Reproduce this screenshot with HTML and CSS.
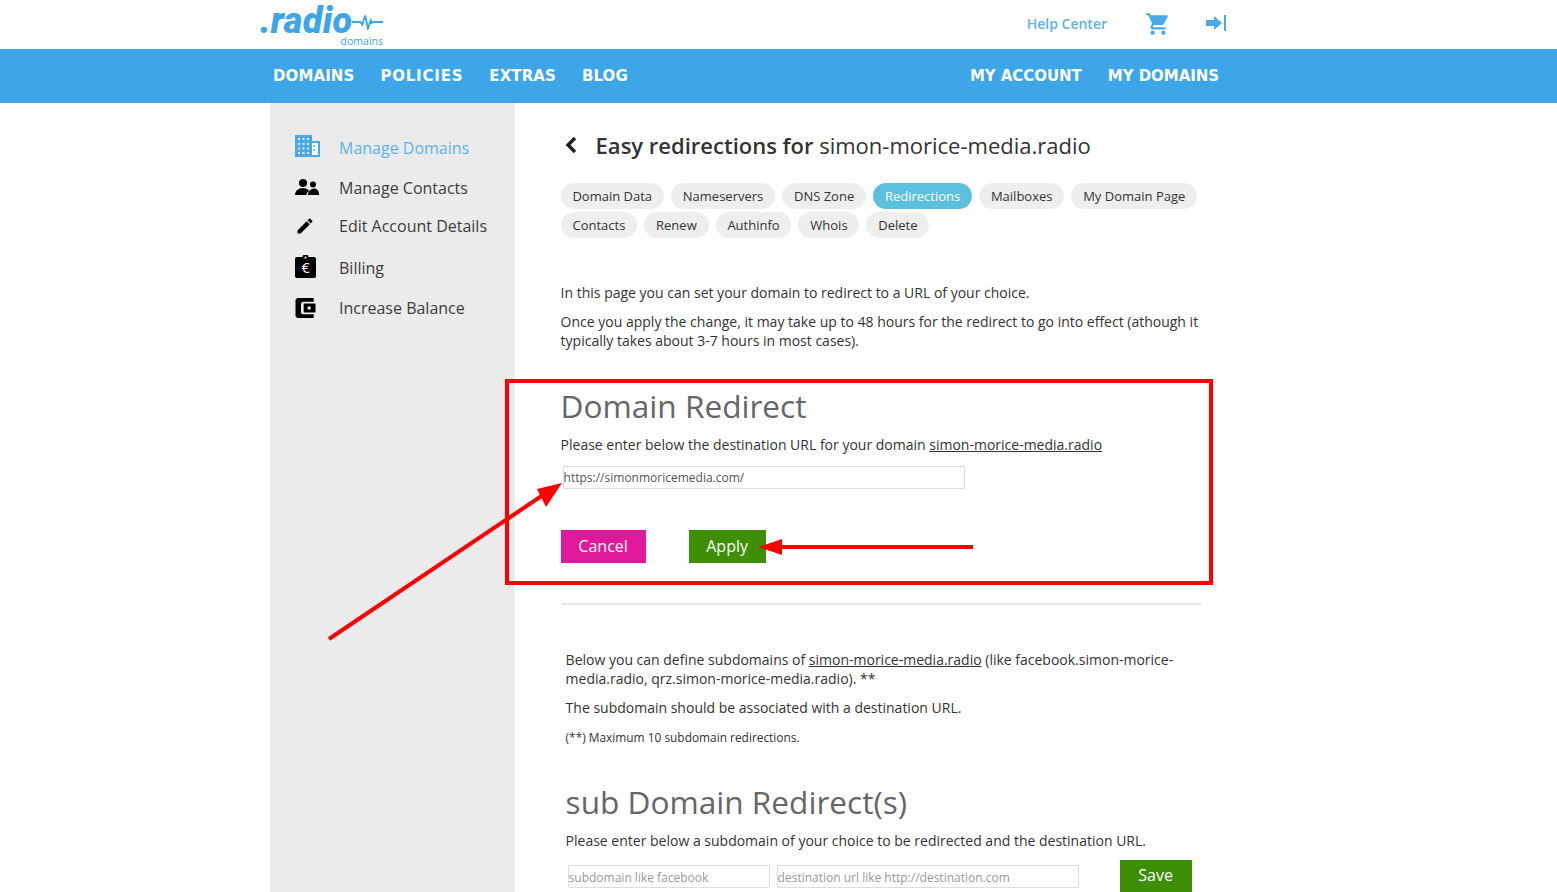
FILE: index.html
```html
<!DOCTYPE html>
<html lang="en">
<head>
    <meta charset="UTF-8">
    <meta name="viewport" content="width=device-width, initial-scale=1.0">
    <title>Easy redirections | .radio domains</title>
    <link rel="stylesheet" href="styles.css">
</head>
<body>
    <div class="page">
        <!-- Top header -->
        <header class="top-bar">
            <div class="container top-inner">
                <a class="logo" href="#">
                    <span class="logo-word">.radio</span>
                    <svg class="logo-pulse" viewBox="0 0 33 16" width="31" height="16">
                        <path d="M0 8h9l2 3 3-10 3 14 3-9 1 3 2-1h10" fill="none" stroke="#3ca6e8" stroke-width="2"/>
                    </svg>
                    <span class="logo-sub">domains</span>
                </a>
                <div class="top-links">
                    <a class="help-link" href="#">Help Center</a>
                    <svg class="cart-icon" viewBox="0 0 24 24" width="26" height="26"><path d="M7 18c-1.1 0-1.99.9-1.99 2S5.9 22 7 22s2-.9 2-2-.9-2-2-2zM1 2v2h2l3.6 7.59-1.35 2.45c-.16.28-.25.61-.25.96 0 1.1.9 2 2 2h12v-2H7.42c-.14 0-.25-.11-.25-.25l.03-.12.9-1.63h7.45c.75 0 1.41-.41 1.75-1.03l3.58-6.49c.08-.14.12-.31.12-.48 0-.55-.45-1-1-1H5.21l-.94-2H1zm16 16c-1.1 0-1.99.9-1.99 2s.89 2 1.99 2 2-.9 2-2-.9-2-2-2z"/></svg>
                    <svg class="login-icon" viewBox="0 0 20 16" width="20" height="16"><path d="M0 5h8V1l8 7-8 7v-4H0zM18 0h2v16h-2z"/></svg>
                </div>
            </div>
        </header>

        <!-- Main nav -->
        <nav class="main-nav">
            <div class="container nav-inner">
                <div class="nav-group nav-left">
                    <a href="#">DOMAINS</a>
                    <a class="nav-wide" href="#">POLICIES</a>
                    <a href="#">EXTRAS</a>
                    <a href="#">BLOG</a>
                </div>
                <div class="nav-group">
                    <a href="#">MY ACCOUNT</a>
                    <a href="#">MY DOMAINS</a>
                </div>
            </div>
        </nav>

        <div class="container body-wrap">
            <!-- Sidebar -->
            <aside class="sidebar">
                <a class="side-item side-domains active" href="#">
                    <svg viewBox="0 0 25 22" width="25" height="22">
                        <path fill-rule="evenodd" d="M0 0h17v6h8v16H0zM3 3v2h2V3zm4.500 0v2h2V3zM12 3v2h2V3zM3 8v2h2V8zm4.500 0v2h2V8zM12 8v2h2V8zM3 12.500v2h2v-2zm4.500 0v2h2v-2zm4.500 0v2h2v-2zM3 17v2h2v-2zm4.500 0v2h2v-2zm4.500 0v2h2v-2z"/>
                        <path fill="white" fill-rule="evenodd" d="M17 8h6v12h-6zm1.500 2v2h1.500v-2zm0 4v2h1.500v-2z"/>
                    </svg>
                    Manage Domains
                </a>
                <a class="side-item side-contacts" href="#">
                    <svg viewBox="0 0 24 16" width="24" height="16">
                        <circle cx="8" cy="4" r="4"/>
                        <circle cx="18" cy="5.500" r="3"/>
                        <path d="M0 16c0-4 3.500-7 7.500-7 3 0 5.500 1 7 3-2 1-3 2.500-3.200 4z"/>
                        <path d="M13 16c0-3.500 3-6.500 6-6.500s5.500 3 5 6.500z"/>
                    </svg>
                    Manage Contacts
                </a>
                <a class="side-item side-edit" href="#">
                    <svg viewBox="0 0 24 24" width="20" height="20"><path d="M3 17.25V21h3.75L17.81 9.94l-3.75-3.75L3 17.25zM20.71 7.04c.39-.39.39-1.02 0-1.41l-2.34-2.34c-.39-.39-1.02-.39-1.41 0l-1.83 1.83 3.75 3.75 1.83-1.83z"/></svg>
                    Edit Account Details
                </a>
                <a class="side-item side-billing" href="#">
                    <svg viewBox="0 0 22 24" width="21" height="23"><path d="M2 2h6a3 3 0 0 1 6 0h6a2 2 0 0 1 2 2v18a2 2 0 0 1-2 2H2a2 2 0 0 1-2-2V4a2 2 0 0 1 2-2z"/><circle cx="11" cy="2.600" r="1.200" fill="#ebebeb"/><text x="11" y="19" text-anchor="middle" class="euro">€</text></svg>
                    Billing
                </a>
                <a class="side-item side-balance" href="#">
                    <svg viewBox="0 0 22 22" width="21" height="20"><path fill-rule="evenodd" d="M3 0h17v4H9a3 3 0 0 0-3 3v8a3 3 0 0 0 3 3h11v4H3a3 3 0 0 1-3-3V3a3 3 0 0 1 3-3zm6 6h13v10H9zm6 3a2 2 0 1 0 0 4 2 2 0 0 0 0-4z"/></svg>
                    Increase Balance
                </a>
            </aside>

            <!-- Content -->
            <main class="content">
                <h1 class="page-title">
                    <svg class="back-icon" viewBox="0 0 12 16" width="12" height="16"><path d="M10 1 3 8l7 7" fill="none" stroke="#1c1c1c" stroke-width="3.400"/></svg>
                    <span><b>Easy redirections for</b> simon-morice-media.radio</span>
                </h1>

                <div class="pills">
                    <a href="#">Domain Data</a>
                    <a href="#">Nameservers</a>
                    <a href="#">DNS Zone</a>
                    <a class="active" href="#">Redirections</a>
                    <a href="#">Mailboxes</a>
                    <a href="#">My Domain Page</a>
                    <a href="#">Contacts</a>
                    <a href="#">Renew</a>
                    <a href="#">Authinfo</a>
                    <a href="#">Whois</a>
                    <a href="#">Delete</a>
                </div>

                <div class="intro">
                    <p>In this page you can set your domain to redirect to a URL of your choice.</p>
                    <p>Once you apply the change, it may take up to 48 hours for the redirect to go into effect (athough it typically takes about 3-7 hours in most cases).</p>
                </div>

                <section class="redirect-box">
                    <h2>Domain Redirect</h2>
                    <p>Please enter below the destination URL for your domain <a href="#">simon-morice-media.radio</a></p>
                    <input class="url-input" type="text" value="https://simonmoricemedia.com/">
                    <div class="btn-row">
                        <button class="btn btn-cancel">Cancel</button>
                        <button class="btn btn-green">Apply</button>
                    </div>
                </section>

                <hr class="divider">

                <section class="sub-box">
                    <p>Below you can define subdomains of <a href="#">simon-morice-media.radio</a> (like facebook.simon-morice-media.radio, qrz.simon-morice-media.radio). **</p>
                    <p>The subdomain should be associated with a destination URL.</p>
                    <p class="note">(**) Maximum 10 subdomain redirections.</p>
                    <h2>sub Domain Redirect(s)</h2>
                    <p>Please enter below a subdomain of your choice to be redirected and the destination URL.</p>
                    <div class="sub-form">
                        <input class="sub-name" type="text" placeholder="subdomain like facebook">
                        <input class="sub-dest" type="text" placeholder="destination url like http://destination.com">
                        <button class="btn btn-green btn-save">Save</button>
                    </div>
                </section>
            </main>
        </div>

        <!-- Red annotations drawn over the page -->
        <svg class="markup" viewBox="0 0 1557 892" width="1557" height="892">
            <rect x="507" y="381" width="704" height="202" fill="none" stroke="#fe0000" stroke-width="4"/>
            <path d="M329 639 543 495" stroke="#fe0000" stroke-width="4" fill="none"/>
            <path d="M562 483 546 507 537 489z" fill="#fe0000"/>
            <path d="M782 547H973" stroke="#fe0000" stroke-width="4" fill="none"/>
            <path d="M758 547 782 539V555z" fill="#fe0000"/>
        </svg>
    </div>
</body>
</html>
```

FILE: styles.css
```css
/* Global Styles */
* {
    box-sizing: border-box;
}

html, body {
    margin: 0;
    height: 100%;
    overflow: hidden;
}

body {
    font-family: 'Open Sans', sans-serif;
    font-size: 14px;
    color: #333;
    background: white;
}

a {
    text-decoration: none;
    color: inherit;
}

.page {
    position: relative;
    height: 892px;
    display: flex;
    flex-direction: column;
    overflow: hidden;
}

.container {
    width: 956px;
    margin-left: 270px;
}

.markup {
    position: absolute;
    left: 0;
    top: 0;
    pointer-events: none;
}

/* Header */
.top-bar {
    height: 49px;
    flex: none;
}

.top-inner {
    display: flex;
    justify-content: space-between;
    height: 49px;
}

.logo {
    position: relative;
    display: block;
    width: 124px;
    height: 49px;
    color: #3ca6e8;
    margin-left: -11px;
}

.logo-word {
    position: absolute;
    left: 1px;
    top: 0;
    line-height: 42px;
    font-family: 'Roboto', sans-serif;
    font-size: 36px;
    font-weight: 900;
    font-style: italic;
    letter-spacing: 0.3px;
}

.logo-pulse {
    position: absolute;
    left: 93px;
    top: 14px;
}

.logo-sub {
    position: absolute;
    right: 0;
    top: 34px;
    font-size: 10.5px;
}

.top-links {
    display: flex;
    align-items: flex-start;
}

.help-link {
    color: #5cb3ec;
    font-size: 14px;
    font-weight: 600;
    margin-top: 14px;
    margin-right: 38px;
}

.cart-icon {
    fill: #4aa9e9;
    margin-top: 11px;
    margin-right: 35px;
}

.login-icon {
    fill: #4aa9e9;
    margin-top: 15px;
}

/* Main nav */
.main-nav {
    height: 54px;
    flex: none;
    background: #3ca6e8;
}

.nav-inner {
    display: flex;
    justify-content: space-between;
    height: 54px;
    align-items: center;
    padding: 0 7px 0 3px;
}

.nav-group {
    display: flex;
    gap: 26px;
}

.nav-group a {
    color: white;
    font-family: 'DejaVu Sans', sans-serif;
    font-weight: bold;
    font-size: 15px;
    letter-spacing: -0.05px;
}

.nav-left a {
    letter-spacing: 0.1px;
}

.nav-left a.nav-wide {
    letter-spacing: 0.8px;
}

/* Body columns */
.body-wrap {
    display: flex;
    flex: 1;
    min-height: 0;
}

.sidebar {
    width: 245px;
    flex: none;
    background: #ebebeb;
    padding-top: 25px;
}

.side-item {
    display: flex;
    align-items: center;
    padding-left: 25px;
    font-size: 16px;
    color: #3d3d3d;
    height: 40px;
}

.side-item svg {
    fill: black;
    flex: none;
    margin-right: 19px;
}

.side-item.active {
    color: #5cb3ec;
}

.side-item.active svg {
    fill: #4aa9e9;
    margin-top: -4px;
}

.side-contacts svg {
    margin-right: 20px;
    margin-top: -3px;
}

.side-edit {
    height: 36px;
}

.side-edit svg {
    margin-right: 24px;
}

.side-billing {
    height: 47px;
}

.side-billing svg {
    margin-right: 23px;
    margin-top: -3px;
}

.side-balance svg {
    margin-right: 23px;
}

.side-balance {
    height: 34px;
}

.euro {
    fill: white;
    font-family: 'Open Sans', sans-serif;
    font-size: 15px;
}

/* Content */
.content {
    width: 640px;
    margin-left: 45.6px;
    flex: none;
}

.page-title {
    display: flex;
    align-items: center;
    margin: 26px 0 0;
    height: 32px;
    font-size: 22px;
    font-weight: 400;
    color: #333;
}

.page-title b {
    font-weight: 600;
}

.back-icon {
    margin-left: 4px;
    margin-right: 19px;
}

.pills {
    display: flex;
    flex-wrap: wrap;
    gap: 3px 7px;
    margin-top: 22px;
    width: 640px;
}

.pills a {
    height: 26px;
    line-height: 26px;
    padding: 0 11.85px;
    border-radius: 13px;
    background: #eee;
    font-size: 13px;
    color: #333;
}

.pills a.active {
    background: #5bc0de;
    color: white;
}

.intro {
    margin-top: 45px;
}

p {
    margin: 0 0 10px;
    line-height: 19px;
}

h2 {
    margin: 0;
    font-size: 31.6px;
    font-weight: 400;
    color: #666;
    line-height: 40px;
}

.redirect-box {
    margin-top: 36px;
}

.redirect-box p a,
.sub-box p a {
    text-decoration: underline;
}

.redirect-box p {
    margin-top: 9px;
    margin-bottom: 12px;
}

input {
    font-family: 'Open Sans', sans-serif;
    font-size: 12px;
    height: 23px;
    padding: 1px 0 0;
    border: 1px solid #ddd;
    border-radius: 1px;
    color: #555;
    background: white;
    outline: none;
}

input::placeholder {
    color: #999;
}

.url-input {
    display: block;
    width: 402px;
    margin-left: 2px;
    padding-top: 0;
}

.btn-row {
    display: flex;
    gap: 43px;
    margin-top: 41px;
}

.btn {
    height: 33px;
    border: none;
    color: white;
    font-family: 'Open Sans', sans-serif;
    font-size: 16px;
    padding: 0 0 2px;
}

.btn-cancel {
    width: 85px;
    background: #e0199b;
}

.btn-green {
    width: 77px;
    background: #3e8e07;
}

.divider {
    border: none;
    border-top: 2px solid #e6e6e6;
    margin: 40px 0 0;
}

.sub-box {
    padding-left: 5px;
    margin-top: 45px;
}

.sub-box .note {
    font-size: 11.9px;
    margin-top: 11px;
    margin-bottom: 0;
}

.sub-box h2 {
    margin-top: 35px;
    margin-bottom: 9px;
}

.sub-form {
    display: flex;
    align-items: flex-start;
    margin-top: 0;
}

.sub-name {
    width: 202px;
    margin: 5px 7px 0 2px;
}

.sub-dest {
    width: 302px;
    margin-top: 5px;
}

.btn-save {
    width: 72px;
    margin-left: 41px;
    height: 36px;
    padding-bottom: 6px;
}
```
